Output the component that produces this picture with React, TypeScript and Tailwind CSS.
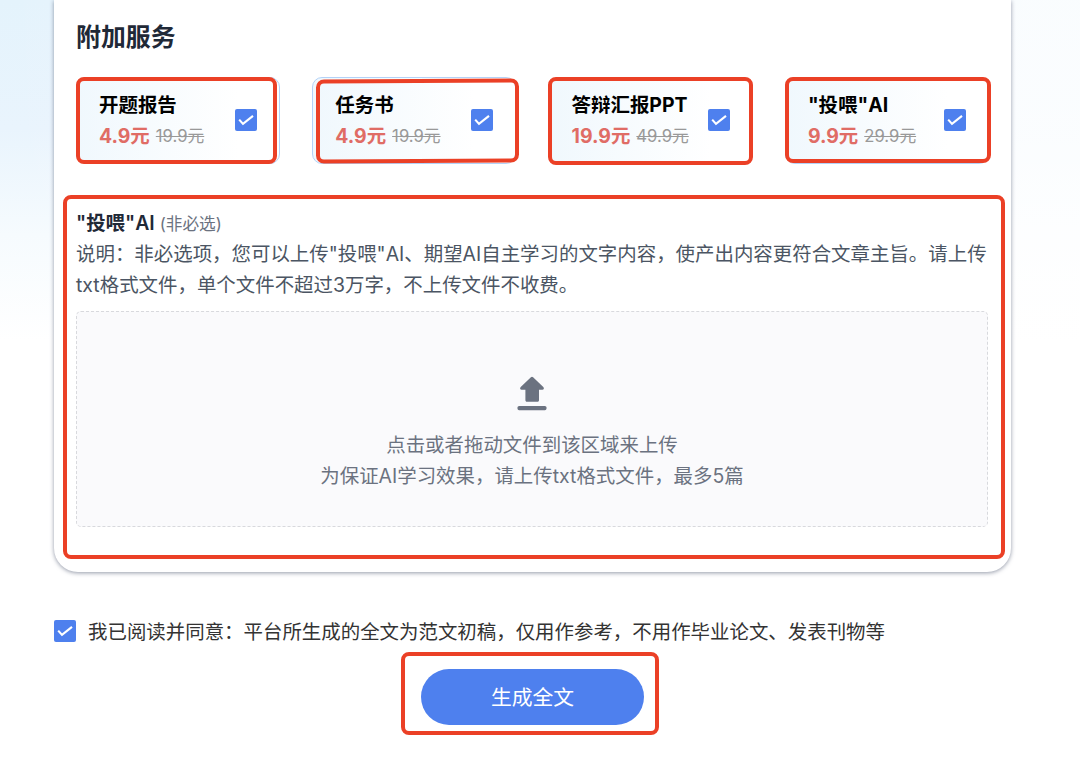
import clsx from "clsx";

const SERVICES = [
  { name: "开题报告", price: "4.9元", original: "19.9元", mark: "left-0 top-0 w-[201px] h-[87px]" },
  { name: "任务书", price: "4.9元", original: "19.9元", mark: "left-[4px] top-[2px] w-[203px] h-[84px] -skew-y-[0.3deg]" },
  { name: "答辩汇报PPT", price: "19.9元", original: "49.9元", mark: "-left-px top-0 w-[205px] h-[88px]" },
  { name: "\"投喂\"AI", price: "9.9元", original: "29.9元", mark: "left-0 top-0 w-[206px] h-[86px]" },
];

function Mark({ className }: { className: string }) {
  return <div className={clsx("absolute border-4 border-[#eb4026] rounded-[8px] pointer-events-none", className)} />;
}

function CheckBox({ className }: { className?: string }) {
  return (
    <span className={clsx("flex items-center justify-center size-[22px] shrink-0 rounded-[2px] bg-[#4e80ee]", className)}>
      <svg width="22" height="22" viewBox="0 0 22 22" fill="none" stroke="white" strokeWidth="2.1">
        <path d="M4.2 10.6 8 14.9 18 6.9" />
      </svg>
    </span>
  );
}

function ServiceCard({ service }: { service: (typeof SERVICES)[number] }) {
  return (
    <div className="relative h-[87px]">
      <div className="flex items-center justify-between h-full px-[22px] border border-[#b3d2f8] rounded-[10px] bg-gradient-to-r from-[#f0f8fd] to-white to-80%">
        <div className="leading-[31px] whitespace-nowrap">
          <p className="pt-px -mb-px font-bold text-black">{service.name}</p>
          <p className="flex items-center gap-[6px]">
            <span className="font-bold text-[#e06c65]">{service.price}</span>
            <span className="pt-px text-[16.7px] text-[#999] line-through">{service.original}</span>
          </p>
        </div>
        <CheckBox className="-mt-px" />
      </div>
      <Mark className={service.mark} />
    </div>
  );
}

function UploadArea() {
  return (
    <div className="mt-[10px] h-[216px] w-[912px] flex flex-col items-center border border-dashed border-[#d8d9dd] rounded-[5px] bg-[#fafafc] text-[#6b7280] leading-[31px]">
      <svg className="mt-[64px] mb-[19px] shrink-0" width="30" height="35" viewBox="0 0 30 35" fill="currentColor">
        <path d="M13.9 1.2a1.6 1.6 0 0 1 2.2 0l10.2 9.8c1.1 1.1.6 2.7-.9 2.7h-3.4v10.6c0 .9-.6 1.5-1.5 1.5h-10.600c-.9 0-1.5-.6-1.5-1.5V13.700H4.600c-1.500 0-2-1.600-.9-2.700z" />
        <rect x="0.5" y="30" width="29" height="4.2" rx="1.6" />
      </svg>
      <p>点击或者拖动文件到该区域来上传</p>
      <p>为保证AI学习效果，请上传txt格式文件，最多5篇</p>
    </div>
  );
}

export default function App() {
  return (
    <div className="h-[758px] overflow-hidden bg-[linear-gradient(174deg,#ffffff_50%,#ffffff_50%)] font-['Inter','Noto_Sans_CJK_SC',sans-serif] text-[19.45px]">
      <div className="h-full bg-[linear-gradient(to_bottom,#e4f3fc_0%,#e9f4fd_17%,#f6fbfe_31%,#ffffff_45%)]">
        <div className="h-full bg-[linear-gradient(to_right,transparent,rgba(255,255,255,0.8)_95%)]">
          <main className="ml-[54px] w-[957px]">
            <section className="h-[572px] rounded-b-[24px] bg-white pl-[22px] pt-[19px] shadow-[0_1px_4px_rgba(75,85,110,0.6)]">
              <h2 className="text-[24.9px] leading-[36px] font-semibold text-[#1f2937]">附加服务</h2>
              <div className="mt-[22px] grid grid-cols-[repeat(4,204px)] gap-[32.3px]">
                {SERVICES.map(s => <ServiceCard key={s.name} service={s} />)}
              </div>

              {/* Feed AI */}
              <div className="relative mt-[43px]">
                <div className="w-[920px] leading-[31px] text-[#4b5563]">
                  <h3 className="pt-px -mb-px text-[#1f2937] font-semibold">
                    "投喂"AI <span className="text-[16.7px] font-normal text-[#6b7280]">(非必选)</span>
                  </h3>
                  <p className="whitespace-nowrap">说明：非必选项，您可以上传"投喂"AI、期望AI自主学习的文字内容，使产出内容更符合文章主旨。请上传</p>
                  <p className="whitespace-nowrap">txt格式文件，单个文件不超过3万字，不上传文件不收费。</p>
                </div>
                <UploadArea />
                <Mark className="-left-[13px] -top-[12px] w-[942px] h-[364px]" />
              </div>
            </section>

            <div className="mt-[44px] flex items-center gap-[12px] leading-[31px] text-[#333]">
              <CheckBox className="-mt-px" />
              <span className="pt-px -mb-px whitespace-nowrap">我已阅读并同意：平台所生成的全文为范文初稿，仅用作参考，不用作毕业论文、发表刊物等</span>
            </div>

            <div className="relative mt-[22px] ml-[367px] w-[223px]">
              <button className="w-full h-[56px] pt-[2px] rounded-full bg-[#4e80ee] text-white text-[20.8px]">生成全文</button>
              <Mark className="-left-[20px] -top-[17px] w-[258px] h-[83px]" />
            </div>
          </main>
        </div>
      </div>
    </div>
  );
}
